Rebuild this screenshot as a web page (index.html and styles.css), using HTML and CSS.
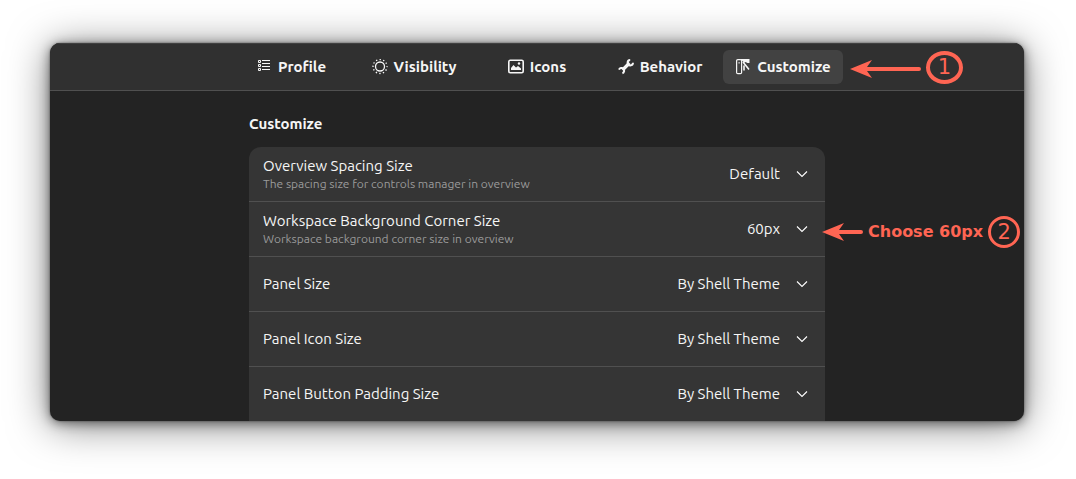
FILE: index.html
```html
<!DOCTYPE html>
<html lang="en">

<head>
    <meta charset="UTF-8">
    <meta name="viewport" content="width=device-width, initial-scale=1.0">
    <title>Customize</title>
    <link rel="stylesheet" href="styles.css">
</head>

<body>
    <div class="window">
        <header class="header">
            <nav class="tabs">
                <button type="button" class="tab">
                    <svg width="16" height="16" viewBox="0 0 16 16" fill="none" stroke="currentColor">
                        <path d="M2.5 1.5h2v2h-2zM2.5 5.5h2v2h-2zM2.5 9.5h2v2h-2z" />
                        <path d="M6 1.5h8M6 4.5h8M6 7.5h8M6 10.5h8" />
                    </svg>
                    Profile
                </button>
                <button type="button" class="tab">
                    <svg width="16" height="16" viewBox="0 0 16 16" fill="none" stroke="currentColor">
                        <circle cx="8" cy="7.5" r="4.5" stroke-width="1.3" />
                        <circle cx="8" cy="7.5" r="7" stroke-width="1.3" stroke-dasharray="1.4 2.265" stroke-dashoffset="0.7" />
                    </svg>
                    Visibility
                </button>
                <button type="button" class="tab">
                    <svg width="16" height="16" viewBox="0 0 16 16" fill="none" stroke="currentColor">
                        <rect x="0.8" y="1.3" width="14.4" height="12.4" rx="1.5" stroke-width="1.6" />
                        <path d="M3 11V9L5.5 6L8 8.5L10 7L13 9.5V11z" fill="currentColor" stroke="none" />
                        <circle cx="11" cy="4.5" r="1.2" fill="currentColor" stroke="none" />
                    </svg>
                    Icons
                </button>
                <button type="button" class="tab">
                    <svg width="16" height="16" viewBox="0 0 16 16" fill="none" stroke="currentColor">
                        <path d="M4.5 11L11.5 4" stroke-width="3.2" />
                        <path d="M12.2 1A2.7 2.7 0 1 0 15 3.8M1 10.6A2.7 2.7 0 1 1 4.4 14.2" stroke-width="2" />
                    </svg>
                    Behavior
                </button>
                <div class="tab-holder">
                    <button type="button" class="tab active">
                        <svg width="16" height="16" viewBox="0 0 16 16" fill="none" stroke="currentColor">
                            <rect x="1.6" y="0.6" width="5" height="14" rx="1.2" stroke-width="1.2" />
                            <path d="M4.1 3v1.6" />
                            <path d="M5 0h9.5v4h-2l-2-1-1 .7z" fill="currentColor" stroke="none" />
                            <path d="M8 3L14 10.5M9 6.5v5" stroke-width="1.6" />
                        </svg>
                        Customize
                    </button>
                    <div class="note note-tab">
                        <svg width="71" height="22" viewBox="0 0 71 22">
                            <path d="M0 13L22 4L17 11H69Q71 11 71 13T69 15H17L22 22z" fill="currentColor" />
                        </svg>
                        <span class="badge badge-wide">1</span>
                    </div>
                </div>
            </nav>
        </header>

        <main class="content">
            <h1 class="title">Customize</h1>
            <div class="card">
                <div class="row">
                    <label class="label" for="spacing">Overview Spacing Size
                        <small>The spacing size for controls manager in overview</small>
                    </label>
                    <div class="dropdown">
                        <select id="spacing">
                            <option>Default</option>
                        </select>
                        <svg width="12" height="8" viewBox="0 0 12 8"><path d="M1 1.5L6 6.5L11 1.5" /></svg>
                    </div>
                </div>
                <div class="row">
                    <label class="label" for="corner">Workspace Background Corner Size
                        <small>Workspace background corner size in overview</small>
                    </label>
                    <div class="dropdown">
                        <select id="corner">
                            <option>60px</option>
                        </select>
                        <svg width="12" height="8" viewBox="0 0 12 8"><path d="M1 1.5L6 6.5L11 1.5" /></svg>
                    </div>
                    <div class="note note-row">
                        <svg width="41" height="18" viewBox="0 0 41 18">
                            <path d="M0 9L22 0L17 7H39Q41 7 41 9T39 11H17L22 18z" fill="currentColor" />
                        </svg>
                        <strong>Choose 60px</strong>
                        <span class="badge">2</span>
                    </div>
                </div>
                <div class="row">
                    <label class="label" for="panel">Panel Size</label>
                    <div class="dropdown">
                        <select id="panel">
                            <option>By Shell Theme</option>
                        </select>
                        <svg width="12" height="8" viewBox="0 0 12 8"><path d="M1 1.5L6 6.5L11 1.5" /></svg>
                    </div>
                </div>
                <div class="row">
                    <label class="label" for="icon">Panel Icon Size</label>
                    <div class="dropdown">
                        <select id="icon">
                            <option>By Shell Theme</option>
                        </select>
                        <svg width="12" height="8" viewBox="0 0 12 8"><path d="M1 1.5L6 6.5L11 1.5" /></svg>
                    </div>
                </div>
                <div class="row">
                    <label class="label" for="padding">Panel Button Padding Size</label>
                    <div class="dropdown">
                        <select id="padding">
                            <option>By Shell Theme</option>
                        </select>
                        <svg width="12" height="8" viewBox="0 0 12 8"><path d="M1 1.5L6 6.5L11 1.5" /></svg>
                    </div>
                </div>
            </div>
        </main>
    </div>
</body>

</html>
```
FILE: styles.css
```css
* {
    box-sizing: border-box;
}

body {
    margin: 0;
    padding: 43px 52px 58px 50px;
    background-color: white;
    color: #f6f6f6;
    font-family: "Ubuntu", "Noto Sans", sans-serif;
    font-size: 15px;
    line-height: 20px;
}

button,
select {
    font: inherit;
    color: inherit;
    border: none;
    background: none;
}

.window {
    background-color: #232323;
    border-radius: 10px;
    overflow: hidden;
    box-shadow: 0 0 2px rgba(0, 0, 0, 0.5), 0 2px 12px rgba(0, 0, 0, 0.5), 0 4px 40px rgba(0, 0, 0, 0.5);
}

.header {
    background-color: #303030;
    border-top: 1px solid #414141;
    border-bottom: 1px solid #505050;
    padding: 6px 0;
}

.tabs {
    display: flex;
    justify-content: center;
    gap: 3px;
}

.tab-holder {
    position: relative;
}

.tab {
    display: flex;
    align-items: center;
    justify-content: center;
    gap: 6px;
    width: 120px;
    height: 34px;
    padding: 0;
    border-radius: 6px;
    font-weight: bold;
}

.tab.active {
    background-color: #424242;
}

.content {
    max-width: 576px;
    margin: 0 auto;
    padding-top: 23px;
}

.title {
    margin: 0 0 13px;
    font-size: 15px;
    line-height: 20px;
}

.card {
    background-color: #353535;
    border-radius: 12px 12px 0 0;
}

.row {
    position: relative;
    display: flex;
    align-items: center;
    justify-content: space-between;
    height: 55px;
    padding: 0 15px 0 14px;
    border-bottom: 1px solid #505050;
}

.row:last-child {
    height: 54px;
    border-bottom: none;
}

.label small {
    display: block;
    color: #9a9a9a;
    font-size: 12px;
    line-height: 16px;
}

.dropdown {
    display: grid;
    align-items: center;
}

.dropdown select,
.dropdown svg {
    grid-area: 1 / 1;
}

.dropdown select {
    appearance: none;
    height: 34px;
    padding: 0 30px 0 0;
    text-align-last: right;
}

.dropdown svg {
    justify-self: end;
    margin-right: 2px;
    fill: none;
    stroke: white;
    stroke-width: 1.1;
    pointer-events: none;
}

/* red hints */
.note {
    position: absolute;
    top: 0;
    bottom: 0;
    left: 100%;
    display: flex;
    align-items: center;
    gap: 5px;
    color: #ff6553;
    font-family: "DejaVu Sans", sans-serif;
    font-size: 16px;
    white-space: nowrap;
}

.note-tab {
    padding-left: 7px;
}

.note-row {
    margin-left: -3px;
    padding-top: 6px;
}

.badge {
    display: flex;
    align-items: center;
    justify-content: center;
    width: 32px;
    height: 32px;
    border: 3px solid #ff6553;
    border-radius: 50%;
    font-size: 21px;
}

.badge-wide {
    width: 37px;
    height: 33px;
    border-width: 4px;
}
```
